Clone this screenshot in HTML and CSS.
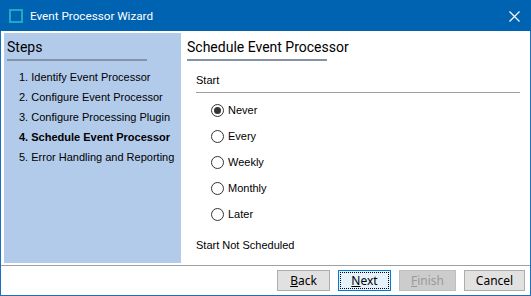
FILE: index.html
```html
<!DOCTYPE html>
<html lang="en">
<head>
    <meta charset="UTF-8">
    <title>Event Processor Wizard</title>
    <link rel="stylesheet" href="styles.css">
</head>
<body>
    <div class="window">
        <div class="titlebar">
            <span class="app-icon"></span>
            <span class="title">Event Processor Wizard</span>
            <svg class="close" width="11" height="11" viewBox="0 0 11 11">
                <path d="M0.5 0.5 L10.5 10.5 M10.5 0.5 L0.5 10.5" stroke="#fff" stroke-width="1.2"/>
            </svg>
        </div>

        <div class="body">
            <div class="steps">
                <h2 class="heading">Steps</h2>
                <ol class="step-list">
                    <li>1. Identify Event Processor</li>
                    <li>2. Configure Event Processor</li>
                    <li>3. Configure Processing Plugin</li>
                    <li class="current">4. Schedule Event Processor</li>
                    <li>5. Error Handling and Reporting</li>
                </ol>
            </div>

            <div class="page">
                <h2 class="heading">Schedule Event Processor</h2>
                <div class="group-label">Start</div>
                <div class="radios">
                    <label class="radio"><span class="dot checked"></span>Never</label>
                    <label class="radio"><span class="dot"></span>Every</label>
                    <label class="radio"><span class="dot"></span>Weekly</label>
                    <label class="radio"><span class="dot"></span>Monthly</label>
                    <label class="radio"><span class="dot"></span>Later</label>
                </div>
                <div class="status">Start Not Scheduled</div>
            </div>
        </div>

        <div class="footer">
            <button class="btn btn-back"><u>B</u>ack</button>
            <button class="btn btn-next"><span class="focus"><u>N</u>ext</span></button>
            <button class="btn btn-finish" disabled><u>F</u>inish</button>
            <button class="btn btn-cancel">Cancel</button>
        </div>
    </div>
</body>
</html>
```

FILE: styles.css
```css
body {
    margin: 0;
    padding: 0;
    background-color: #fff;
}

.window {
    width: 531px;
    height: 296px;
    box-sizing: border-box;
    border: 1px solid #1a6fbf;
    border-top: none;
    display: flex;
    flex-direction: column;
    background-color: #fff;
}

.titlebar {
    height: 31px;
    margin: 0 -1px;
    background-color: #0063b1;
    display: flex;
    align-items: center;
    padding-left: 9px;
    flex-shrink: 0;
}

.app-icon {
    width: 10px;
    height: 10px;
    border: 2px solid #1fa9c2;
    margin-right: 7px;
    margin-top: 1px;
}

.title {
    color: #fff;
    font-family: Roboto, sans-serif;
    font-size: 11.7px;
    flex: 1;
}

.close {
    margin-right: 11px;
    margin-top: 1px;
}

.body {
    display: flex;
    height: 230px;
    padding: 2px 0 0 3px;
    flex-shrink: 0;
}

.steps {
    width: 177px;
    background-color: #b3cbeb;
    padding: 3px 0 0 3px;
    box-sizing: border-box;
}

.heading {
    font-family: Roboto, sans-serif;
    font-weight: normal;
    font-size: 14px;
    color: #000;
    margin: 0;
    line-height: 20px;
    height: 22px;
    border-bottom: 2px solid #8494a8;
}

.steps .heading {
    width: 140px;
    margin-top: 1px;
}

.step-list {
    list-style: none;
    margin: 6px 0 0 12px;
    padding: 0;
    font-family: "Liberation Sans", Arial, sans-serif;
    font-size: 11px;
    color: #000;
    white-space: nowrap;
}

.step-list li {
    height: 20px;
    line-height: 20px;
}

.step-list .current {
    font-weight: bold;
}

.page {
    flex: 1;
    padding: 4px 0 0 6px;
    font-family: "Liberation Sans", Arial, sans-serif;
    font-size: 11px;
    color: #000;
}

.page .heading {
    width: 140px;
    white-space: nowrap;
}

.group-label {
    margin: 9px 10px 0 9px;
    height: 22px;
    line-height: 20px;
    border-bottom: 1px solid #a0a0a0;
}

.radios {
    display: flex;
    flex-direction: column;
    padding: 4px 0 0 24px;
}

.radio {
    display: flex;
    align-items: center;
    height: 26px;
}

.dot {
    width: 11px;
    height: 11px;
    border: 1px solid #333;
    border-radius: 50%;
    margin-right: 4px;
    display: flex;
    align-items: center;
    justify-content: center;
    background-color: #fff;
}

.dot.checked::after {
    content: "";
    width: 7px;
    height: 7px;
    border-radius: 50%;
    background-color: #333;
}

.status {
    margin: 8px 0 0 9px;
    line-height: 20px;
}

.footer {
    border-top: 1px solid #a0a0a0;
    margin-top: 2px;
    display: flex;
    justify-content: flex-end;
    gap: 8px;
    padding: 4px 5px 0 0;
}

.btn {
    font-family: "Noto Sans", sans-serif;
    font-size: 12px;
    height: 21px;
    padding: 0;
    border: 1px solid #adadad;
    background-color: #e1e1e1;
    color: #000;
    box-sizing: border-box;
}

.btn-back { width: 53px; }
.btn-next { width: 53px; border-color: #0078d7; background-color: #e5f1fb; padding: 1px; }
.btn-finish { width: 57px; background-color: #cccccc; border-color: #bfbfbf; color: #9a9a9a; }
.btn-cancel { width: 61px; }

.focus {
    display: flex;
    align-items: center;
    justify-content: center;
    height: 100%;
    border: 1px dotted #000;
    box-sizing: border-box;
}
```
